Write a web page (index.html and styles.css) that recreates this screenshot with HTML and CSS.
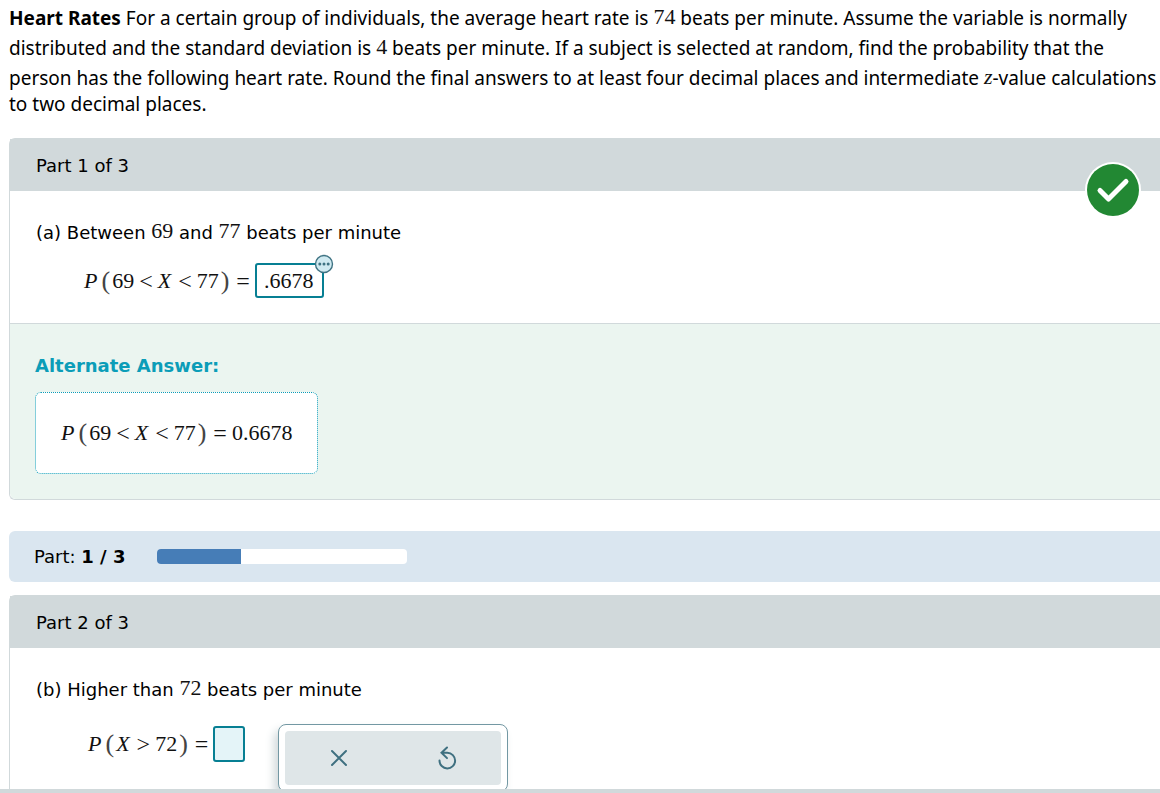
FILE: index.html
```
<!DOCTYPE html>
<html lang="en">
<head>
  <meta charset="UTF-8">
  <meta name="viewport" content="width=device-width, initial-scale=1">
  <title>Heart Rates</title>
  <link rel="stylesheet" href="styles.css">
</head>
<body>
  <main class="page">
    <p class="question">
      <strong>Heart Rates</strong> For a certain group of individuals, the average heart rate is <span class="num">74</span> beats per minute. Assume the variable is normally
      distributed and the standard deviation is <span class="num">4</span> beats per minute. If a subject is selected at random, find the probability that the
      person has the following heart rate. Round the final answers to at least four decimal places and intermediate <span class="num var">z</span>-value calculations
      to two decimal places.
    </p>

    <section class="card">
      <h2 class="card-header">Part 1 of 3</h2>
      <svg class="check" viewBox="0 0 56 56" role="img" aria-label="Correct">
        <circle cx="28" cy="28" r="28" fill="#fff"/>
        <circle cx="28" cy="28" r="26" fill="#228833"/>
        <path d="M15 28.5L23.5 37L41 19.5" fill="none" stroke="#fff" stroke-width="5" stroke-linecap="round" stroke-linejoin="round"/>
      </svg>
      <div class="card-body">
        <p class="prompt">(a) Between <span class="num">69</span> and <span class="num">77</span> beats per minute</p>
        <div class="answer-row">
          <label class="formula" for="answerA"><i>P</i><span class="paren">(</span>69<span class="op">&lt;</span><i>X</i><span class="op">&lt;</span>77<span class="paren">)</span><span class="op">=</span></label>
          <div class="answer-wrap">
            <input class="answer" id="answerA" type="text" value=".6678">
            <button class="more" type="button" aria-label="More">
              <svg viewBox="0 0 20 20">
                <circle cx="10" cy="10" r="8.5" fill="#d0eaf1" stroke="#3f7383" stroke-width="1.4"/>
                <g fill="#3f7383"><circle cx="5.8" cy="10" r="1.5"/><circle cx="10" cy="10" r="1.5"/><circle cx="14.2" cy="10" r="1.5"/></g>
              </svg>
            </button>
          </div>
        </div>
      </div>
      <div class="alternate">
        <h3>Alternate Answer:</h3>
        <div class="alternate-box">
          <div class="formula"><i>P</i><span class="paren">(</span>69<span class="op">&lt;</span><i>X</i><span class="op">&lt;</span>77<span class="paren">)</span><span class="op">=</span>0.6678</div>
        </div>
      </div>
    </section>

    <div class="progress">
      <span>Part: <strong>1 / 3</strong></span>
      <div class="track"><div class="fill" style="width: 33.3%"></div></div>
    </div>

    <section class="card">
      <h2 class="card-header">Part 2 of 3</h2>
      <div class="card-body">
        <p class="prompt">(b) Higher than <span class="num">72</span> beats per minute</p>
        <div class="answer-row answer-row-open">
          <div class="equation">
            <label class="formula" for="answerB"><i>P</i><span class="paren">(</span><i>X</i><span class="op">&gt;</span>72<span class="paren">)</span><span class="op">=</span></label>
            <input class="answer answer-empty" id="answerB" type="text">
          </div>
          <div class="keypad">
            <button type="button" aria-label="Clear">
              <svg viewBox="0 0 24 24"><path d="M5 5L19 19M19 5L5 19"/></svg>
            </button>
            <button type="button" aria-label="Undo">
              <svg viewBox="0 0 24 24"><path d="M4.5 14.5A7.8 7.8 0 1 0 12.3 6.8H6.5M12 1.5L6.5 6.8L12 12.1"/></svg>
            </button>
          </div>
        </div>
      </div>
    </section>
  </main>
  <footer class="bottom-bar"></footer>
</body>
</html>
```

FILE: styles.css
```
* {
  box-sizing: border-box;
}
body {
  margin: 0;
  height: 100vh;
  display: flex;
  flex-direction: column;
  background: #fff;
  color: #000;
  font-family: Verdana, "DejaVu Sans", sans-serif;
  font-size: 18px;
  line-height: 25px;
}
h2, h3, p {
  margin: 0;
  font-size: 18px;
}
.page {
  flex: 1;
  min-height: 0;
  overflow: hidden;
  padding: 2px 0 0 9px;
}
.question {
  margin-bottom: 21px;
  font-family: "Noto Sans", sans-serif;
  font-size: 19px;
}
.num, .formula, .answer {
  font-family: "Liberation Serif", "Times New Roman", serif;
  font-size: 22px;
  color: #111;
}
.num {
  display: inline-block;
  line-height: 30px;
  vertical-align: 1px;
}
.var {
  font-style: italic;
}
.card {
  position: relative;
  border: 1px solid #d1d9db;
  border-right: 0;
  border-radius: 6px 0 0 6px;
}
.card-header {
  padding: 14px 26px 13px;
  background: #d1d9db;
  font-weight: normal;
}
.check {
  position: absolute;
  top: 23px;
  right: 19px;
  width: 56px;
  height: 56px;
}
.card-body {
  padding: 25px 26px;
}
.answer-row {
  display: flex;
  align-items: center;
  margin-top: 17px;
  padding-left: 48px;
}
.formula {
  display: flex;
  align-items: center;
  line-height: 30px;
}
.formula i {
  padding-right: 2px;
}
.paren {
  padding: 0 2px;
  font-size: 26px;
  color: #444;
}
.op {
  padding: 0 5px;
  font-size: 24px;
}
.answer-wrap {
  position: relative;
}
.answer {
  display: block;
  width: 69px;
  height: 35px;
  padding: 0 7px;
  border: 2px solid #077f93;
  border-radius: 3px;
  background: #fff;
}
.answer-empty {
  width: 32px;
  height: 36px;
  background: #e4f4f8;
}
.more {
  position: absolute;
  top: -9px;
  right: -10px;
  width: 20px;
  height: 20px;
  padding: 0;
  border: 0;
  background: none;
}
.more svg {
  display: block;
}
.alternate {
  padding: 29px 25px 25px;
  border-top: 1px solid #d1d9db;
  border-radius: 0 0 0 6px;
  background: #ebf5f0;
}
.alternate h3 {
  margin-bottom: 14px;
  color: #0b9db8;
}
.alternate-box {
  width: fit-content;
  padding: 25px;
  border: 1px dotted #0b9db8;
  border-radius: 6px;
  background: #fff;
}
.progress {
  display: flex;
  align-items: center;
  gap: 32px;
  margin: 31px 0 13px;
  padding: 13px 25px;
  border-radius: 6px 0 0 6px;
  background: #dae6f0;
}
.track {
  width: 250px;
  height: 15px;
  border-radius: 4px;
  background: #fff;
  overflow: hidden;
}
.fill {
  height: 100%;
  background: #467db7;
}
.answer-row-open {
  align-items: flex-start;
  margin-top: 21px;
  padding-left: 52px;
}
.equation {
  display: flex;
  align-items: center;
  padding-top: 2px;
}
.keypad {
  display: flex;
  margin-left: 33px;
  width: 230px;
  height: 68px;
  padding: 6px;
  border: 1px solid #7398a3;
  border-radius: 8px;
  background: #fff;
  box-shadow: -4px 6px 10px #d1d9db;
}
.keypad button {
  flex: 1;
  display: grid;
  place-items: center;
  border: 0;
  background: #dfe6e8;
}
.keypad button:first-child {
  border-radius: 4px 0 0 4px;
}
.keypad button:last-child {
  border-radius: 0 4px 4px 0;
}
.keypad svg {
  width: 24px;
  height: 24px;
  fill: none;
  stroke: #3f7080;
  stroke-width: 2;
  stroke-linecap: round;
}
.bottom-bar {
  height: 4px;
  background: #d1d9db;
}
```
